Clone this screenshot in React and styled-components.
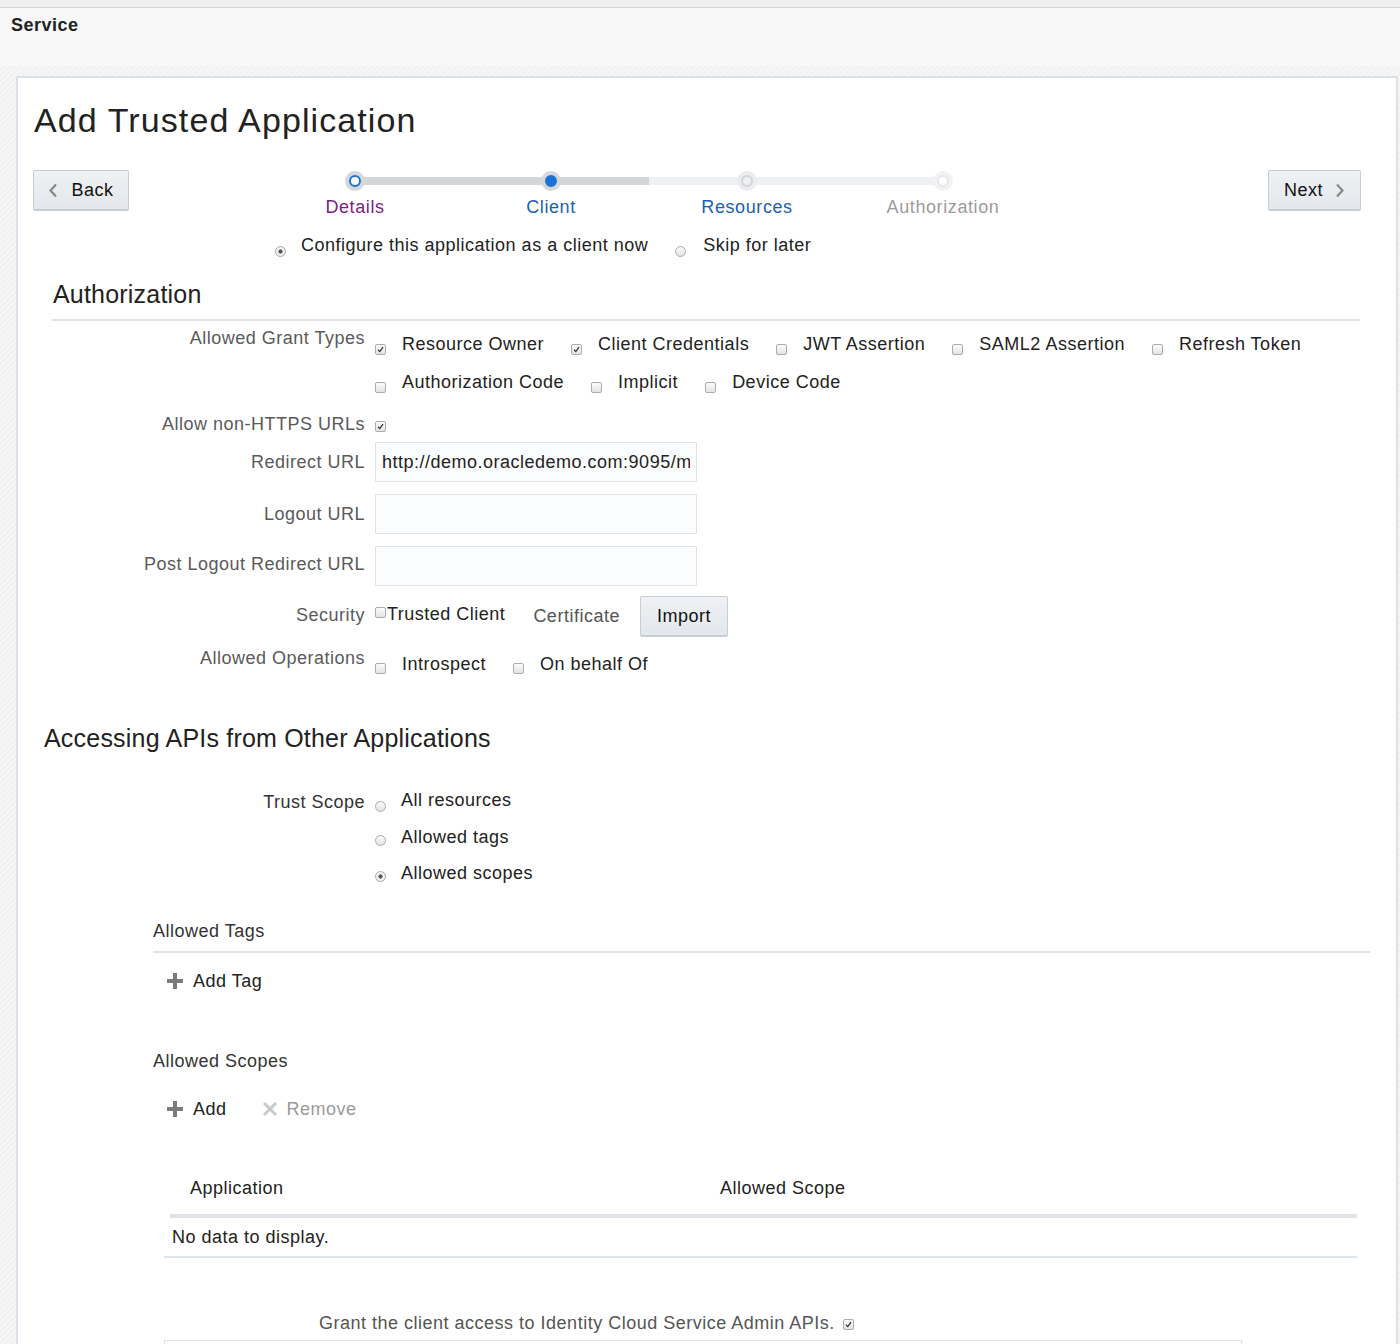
import React from "react";
import styled, { createGlobalStyle } from "styled-components";

const GlobalStyle = createGlobalStyle`
  html, body {
    margin: 0;
    padding: 0;
    height: 1344px;
    overflow: hidden;
  }
  body {
    font-family: "Liberation Sans", Arial, sans-serif;
    font-size: 18px;
    letter-spacing: 0.5px;
    color: #222;
    background: #fff;
  }
`;

const TopStrip = styled.div`
  height: 7px;
  background: #efefef;
  border-bottom: 1px solid #d6d6d6;
`;

const Header = styled.div`
  height: 52px;
  padding: 6px 0 0 11px;
  background: #f8f8f8;
  font-weight: bold;
  line-height: 22px;
  color: #222;
`;

const Stage = styled.div`
  padding: 10px 2px 0 16px;
  background: repeating-linear-gradient(
    135deg,
    #f6f6f6 0px,
    #f6f6f6 2px,
    #f1f1f1 2px,
    #f1f1f1 4px
  );
`;

const Panel = styled.div`
  background: #fff;
  border: 2px solid #dae1e8;
  border-bottom: none;
  height: 1400px;
`;

const Title = styled.h1`
  margin: 0;
  padding: 22px 0 0 16px;
  font-size: 34px;
  line-height: 40px;
  letter-spacing: 1.1px;
  font-weight: normal;
  color: #222;
`;

const Toolbar = styled.div`
  display: flex;
  align-items: flex-start;
  margin-top: 30px;
  padding: 0 35px 0 15px;
`;

const NavButton = styled.button`
  display: flex;
  align-items: center;
  justify-content: center;
  gap: ${(p) => (p.$gap ? p.$gap : 13)}px;
  width: ${(p) => p.$width}px;
  height: 41px;
  padding: 0;
  margin-left: ${(p) => (p.$right ? "auto" : "0")};
  font-family: inherit;
  font-size: 18px;
  letter-spacing: 0.5px;
  color: #111;
  background: linear-gradient(#eff1f4, #e3e7eb);
  border: 1px solid #c6cdd5;
  border-bottom-width: 2px;
  border-radius: 2px;
`;

const Train = styled.div`
  display: flex;
  margin-left: 128px;
  padding-top: 1px;
`;

const Step = styled.div`
  position: relative;
  width: 196px;
  display: flex;
  flex-direction: column;
  align-items: center;

  &::before,
  &::after {
    content: "";
    position: absolute;
    top: 6px;
    height: 8px;
    width: 98px;
  }
  &::before {
    left: 0;
    background: ${(p) => p.$leftLine || "transparent"};
  }
  &::after {
    right: 0;
    background: ${(p) => p.$rightLine || "transparent"};
  }
`;

const StepDot = styled.span`
  position: relative;
  z-index: 1;
  box-sizing: border-box;
  width: 20px;
  height: 20px;
  border-radius: 50%;
  background: ${(p) => p.$ring};
  display: flex;
  align-items: center;
  justify-content: center;

  &::after {
    content: "";
    box-sizing: border-box;
    width: 12px;
    height: 12px;
    border-radius: 50%;
    background: ${(p) => p.$fill};
    border: 2px solid ${(p) => p.$stroke};
  }
`;

const StepLabel = styled.span`
  margin-top: 5px;
  line-height: 22px;
  letter-spacing: 0.6px;
  color: ${(p) => p.$color};
`;

const ChoiceRow = styled.div`
  display: flex;
  margin: 16px 0 0 257px;
  line-height: 22px;
`;

const Choice = styled.label`
  display: flex;
  align-items: flex-start;
  margin-right: ${(p) => (p.$gap != null ? p.$gap : 27)}px;
  color: #222;
`;

const RadioMark = styled.span`
  box-sizing: border-box;
  flex: none;
  width: 11px;
  height: 11px;
  margin: ${(p) => p.$top}px ${(p) => (p.$space != null ? p.$space : 15)}px 0 0;
  border-radius: 50%;
  border: 1px solid #acacac;
  background: ${(p) =>
    p.$on
      ? "radial-gradient(circle, #555 0, #555 1.8px, #f4f4f4 2.4px, #e2e2e2 100%)"
      : "linear-gradient(#fafafa, #e2e2e2)"};
`;

const BoxMark = styled.span`
  box-sizing: border-box;
  flex: none;
  width: 11px;
  height: 11px;
  margin: ${(p) => p.$top}px ${(p) => (p.$space != null ? p.$space : 16)}px 0
    ${(p) => p.$lead || 0}px;
  border: 1px solid #acacac;
  border-radius: 2px;
  background: linear-gradient(#fbfbfb, #e4e4e4);
  display: flex;
  align-items: center;
  justify-content: center;
`;

const SectionTitle = styled.h2`
  margin: ${(p) => p.$top}px ${(p) => (p.$rule ? 36 : 0)}px 0
    ${(p) => p.$left}px;
  padding: 0 0 ${(p) => (p.$rule ? 10 : 0)}px 1px;
  font-size: 25px;
  line-height: 30px;
  letter-spacing: 0.2px;
  font-weight: normal;
  color: #222;
  border-bottom: ${(p) => (p.$rule ? "2px solid #dce3ea" : "none")};
`;

const FormRow = styled.div`
  display: flex;
  align-items: flex-start;
  margin-top: ${(p) => p.$top}px;
`;

const FieldLabel = styled.div`
  flex: none;
  width: 347px;
  padding-top: ${(p) => p.$pad || 0}px;
  text-align: right;
  line-height: 22px;
  color: ${(p) => p.$color || "#5a5a5a"};
`;

const FieldValue = styled.div`
  margin-left: 10px;
  padding-top: ${(p) => p.$pad || 0}px;
  display: flex;
  flex-direction: column;
  gap: ${(p) => (p.$gap != null ? p.$gap : 16)}px;
`;

const Line = styled.div`
  display: flex;
  align-items: flex-start;
  line-height: 22px;
`;

const TextInput = styled.input`
  box-sizing: border-box;
  width: 322px;
  height: 40px;
  padding: 0 6px;
  font-family: inherit;
  font-size: 18px;
  letter-spacing: 0.5px;
  color: #222;
  background: #fbfcfd;
  border: 1px solid #dde3e9;
  border-radius: 1px;
  outline: none;
`;

const PlainText = styled.span`
  margin-right: ${(p) => p.$gap || 0}px;
  margin-top: ${(p) => p.$top || 0}px;
  color: ${(p) => p.$color || "#222"};
  line-height: 22px;
`;

const ImportButton = styled.button`
  width: 88px;
  height: 41px;
  padding: 0;
  font-family: inherit;
  font-size: 18px;
  letter-spacing: 0.5px;
  color: #111;
  background: linear-gradient(#eff1f4, #e3e7eb);
  border: 1px solid #c6cdd5;
  border-bottom-width: 2px;
  border-radius: 2px;
`;

const SubTitle = styled.div`
  margin: ${(p) => p.$top}px ${(p) => (p.$rule ? 26 : 0)}px 0 135px;
  padding-bottom: ${(p) => (p.$rule ? 9 : 0)}px;
  line-height: 22px;
  color: #333;
  border-bottom: ${(p) => (p.$rule ? "2px solid #dce3ea" : "none")};
`;

const ActionBar = styled.div`
  display: flex;
  align-items: center;
  margin: ${(p) => p.$top}px 0 0 148px;
  line-height: 22px;
`;

const Action = styled.span`
  display: flex;
  align-items: center;
  gap: ${(p) => p.$gap}px;
  margin-right: 35px;
  color: ${(p) => (p.$muted ? "#9a9a9a" : "#222")};
`;

const Table = styled.div`
  margin: 42px 39px 0 146px;
`;

const TableHead = styled.div`
  display: grid;
  grid-template-columns: 550px 1fr;
  height: 52px;
  align-items: center;
  margin-left: 6px;
  border-bottom: 4px solid #dfe3e7;
  color: #222;
`;

const HeadCell = styled.div`
  padding-left: ${(p) => p.$pad}px;
`;

const EmptyRow = styled.div`
  height: 38px;
  display: flex;
  align-items: center;
  padding-left: 8px;
  border-bottom: 2px solid #dce3ea;
  color: #222;
`;

const GrantLine = styled.div`
  display: flex;
  align-items: flex-start;
  margin: 54px 0 0 301px;
  line-height: 22px;
  color: #555;
`;

const Frame = styled.div`
  margin: 6px 0 0 146px;
  width: 1076px;
  height: 60px;
  border: 1px solid #e2e2e2;
  background: #fdfdfd;
`;

const Check = () => (
  <svg width="7" height="7" viewBox="0 0 7 7">
    <path d="M1 3.8 L2.8 5.6 L6 1.2" fill="none" stroke="#333" strokeWidth="1.3" />
  </svg>
);

const Box = ({ on, top, space, lead }) => (
  <BoxMark $top={top} $space={space} $lead={lead}>
    {on && <Check />}
  </BoxMark>
);

const ChevronLeft = () => (
  <svg width="10" height="15" viewBox="0 0 10 15">
    <polyline points="8,1.5 2.5,7.5 8,13.5" fill="none" stroke="#888" strokeWidth="2.2" />
  </svg>
);

const ChevronRight = () => (
  <svg width="10" height="15" viewBox="0 0 10 15">
    <polyline points="2,1.5 7.5,7.5 2,13.5" fill="none" stroke="#888" strokeWidth="2.2" />
  </svg>
);

const PlusIcon = () => (
  <svg width="18" height="18" viewBox="0 0 18 18">
    <path d="M9 1 V17 M1 9 H17" stroke="#7b7b7b" strokeWidth="4" />
  </svg>
);

const CrossIcon = () => (
  <svg width="16" height="16" viewBox="0 0 16 16">
    <path d="M2 2 L14 14 M14 2 L2 14" stroke="#c9c9c9" strokeWidth="3" />
  </svg>
);

const steps = [
  { name: "Details", color: "#7b1f86", ring: "#d5d7da", fill: "#fff", stroke: "#1a73d0", right: "#d3d6d9" },
  { name: "Client", color: "#1c5fae", ring: "#d5d7da", fill: "#1a73d0", stroke: "#1a73d0", left: "#d3d6d9", right: "#d3d6d9" },
  { name: "Resources", color: "#1c5fae", ring: "#ebecee", fill: "#eef0f2", stroke: "#d2d5d9", left: "#f0f1f2", right: "#f0f1f2" },
  { name: "Authorization", color: "#9b9b9b", ring: "#f1f2f3", fill: "#fff", stroke: "#e4e6e9", left: "#f0f1f2" },
];

const grantRows = [
  [
    ["Resource Owner", true],
    ["Client Credentials", true],
    ["JWT Assertion", false],
    ["SAML2 Assertion", false],
    ["Refresh Token", false],
  ],
  [
    ["Authorization Code", false],
    ["Implicit", false],
    ["Device Code", false],
  ],
];

export default function App() {
  return (
    <>
      <GlobalStyle />
      <TopStrip />
      <Header>Service</Header>
      <Stage>
        <Panel>
          <Title>Add Trusted Application</Title>

          <Toolbar>
            <NavButton $width={96}>
              <ChevronLeft />
              Back
            </NavButton>
            <Train>
              {steps.map((s) => (
                <Step key={s.name} $leftLine={s.left} $rightLine={s.right}>
                  <StepDot $ring={s.ring} $fill={s.fill} $stroke={s.stroke} />
                  <StepLabel $color={s.color}>{s.name}</StepLabel>
                </Step>
              ))}
            </Train>
            <NavButton $width={93} $right $gap={12}>
              Next
              <ChevronRight />
            </NavButton>
          </Toolbar>

          <ChoiceRow>
            <Choice>
              <RadioMark $on $top={12} />
              Configure this application as a client now
            </Choice>
            <Choice>
              <RadioMark $top={12} $space={17} />
              Skip for later
            </Choice>
          </ChoiceRow>

          <SectionTitle $top={22} $left={34} $rule>
            Authorization
          </SectionTitle>

          <FormRow $top={6}>
            <FieldLabel>Allowed Grant Types</FieldLabel>
            <FieldValue $pad={6}>
              {grantRows.map((row, i) => (
                <Line key={i}>
                  {row.map(([name, on]) => (
                    <Choice key={name} $gap={27}>
                      <Box on={on} top={11} />
                      {name}
                    </Choice>
                  ))}
                </Line>
              ))}
            </FieldValue>
          </FormRow>

          <FormRow $top={20}>
            <FieldLabel>Allow non-HTTPS URLs</FieldLabel>
            <FieldValue>
              <Line>
                <Box on top={8} />
              </Line>
            </FieldValue>
          </FormRow>

          <FormRow $top={7}>
            <FieldLabel $pad={9}>Redirect URL</FieldLabel>
            <FieldValue>
              <TextInput defaultValue="http://demo.oracledemo.com:9095/myapp/callback" />
            </FieldValue>
          </FormRow>

          <FormRow $top={12}>
            <FieldLabel $pad={9}>Logout URL</FieldLabel>
            <FieldValue>
              <TextInput />
            </FieldValue>
          </FormRow>

          <FormRow $top={12}>
            <FieldLabel $pad={7}>Post Logout Redirect URL</FieldLabel>
            <FieldValue>
              <TextInput />
            </FieldValue>
          </FormRow>

          <FormRow $top={10}>
            <FieldLabel $pad={8}>Security</FieldLabel>
            <FieldValue>
              <Line>
                <Box top={11} space={1} />
                <PlainText $gap={28} $top={7}>Trusted Client</PlainText>
                <PlainText $gap={20} $top={9} $color="#555">
                  Certificate
                </PlainText>
                <ImportButton>Import</ImportButton>
              </Line>
            </FieldValue>
          </FormRow>

          <FormRow $top={10}>
            <FieldLabel>Allowed Operations</FieldLabel>
            <FieldValue $pad={6}>
              <Line>
                <Choice $gap={27}>
                  <Box top={10} />
                  Introspect
                </Choice>
                <Choice>
                  <Box top={10} />
                  On behalf Of
                </Choice>
              </Line>
            </FieldValue>
          </FormRow>

          <SectionTitle $top={48} $left={25}>
            Accessing APIs from Other Applications
          </SectionTitle>

          <FormRow $top={36}>
            <FieldLabel $pad={2} $color="#333">
              Trust Scope
            </FieldLabel>
            <FieldValue $gap={14}>
              <Line>
                <RadioMark $top={12} />
                All resources
              </Line>
              <Line>
                <RadioMark $top={9} />
                Allowed tags
              </Line>
              <Line>
                <RadioMark $on $top={9} />
                Allowed scopes
              </Line>
            </FieldValue>
          </FormRow>

          <SubTitle $top={36} $rule>
            Allowed Tags
          </SubTitle>
          <ActionBar $top={17}>
            <Action $gap={9}>
              <PlusIcon />
              Add Tag
            </Action>
          </ActionBar>

          <SubTitle $top={58}>Allowed Scopes</SubTitle>
          <ActionBar $top={26}>
            <Action $gap={9}>
              <PlusIcon />
              Add
            </Action>
            <Action $gap={9} $muted>
              <CrossIcon />
              Remove
            </Action>
          </ActionBar>

          <Table>
            <TableHead>
              <HeadCell $pad={20}>Application</HeadCell>
              <HeadCell $pad={0}>Allowed Scope</HeadCell>
            </TableHead>
            <EmptyRow>No data to display.</EmptyRow>
          </Table>

          <GrantLine>
            Grant the client access to Identity Cloud Service Admin APIs.
            <Box on top={7} space={0} lead={8} />
          </GrantLine>
          <Frame />
        </Panel>
      </Stage>
    </>
  );
}
